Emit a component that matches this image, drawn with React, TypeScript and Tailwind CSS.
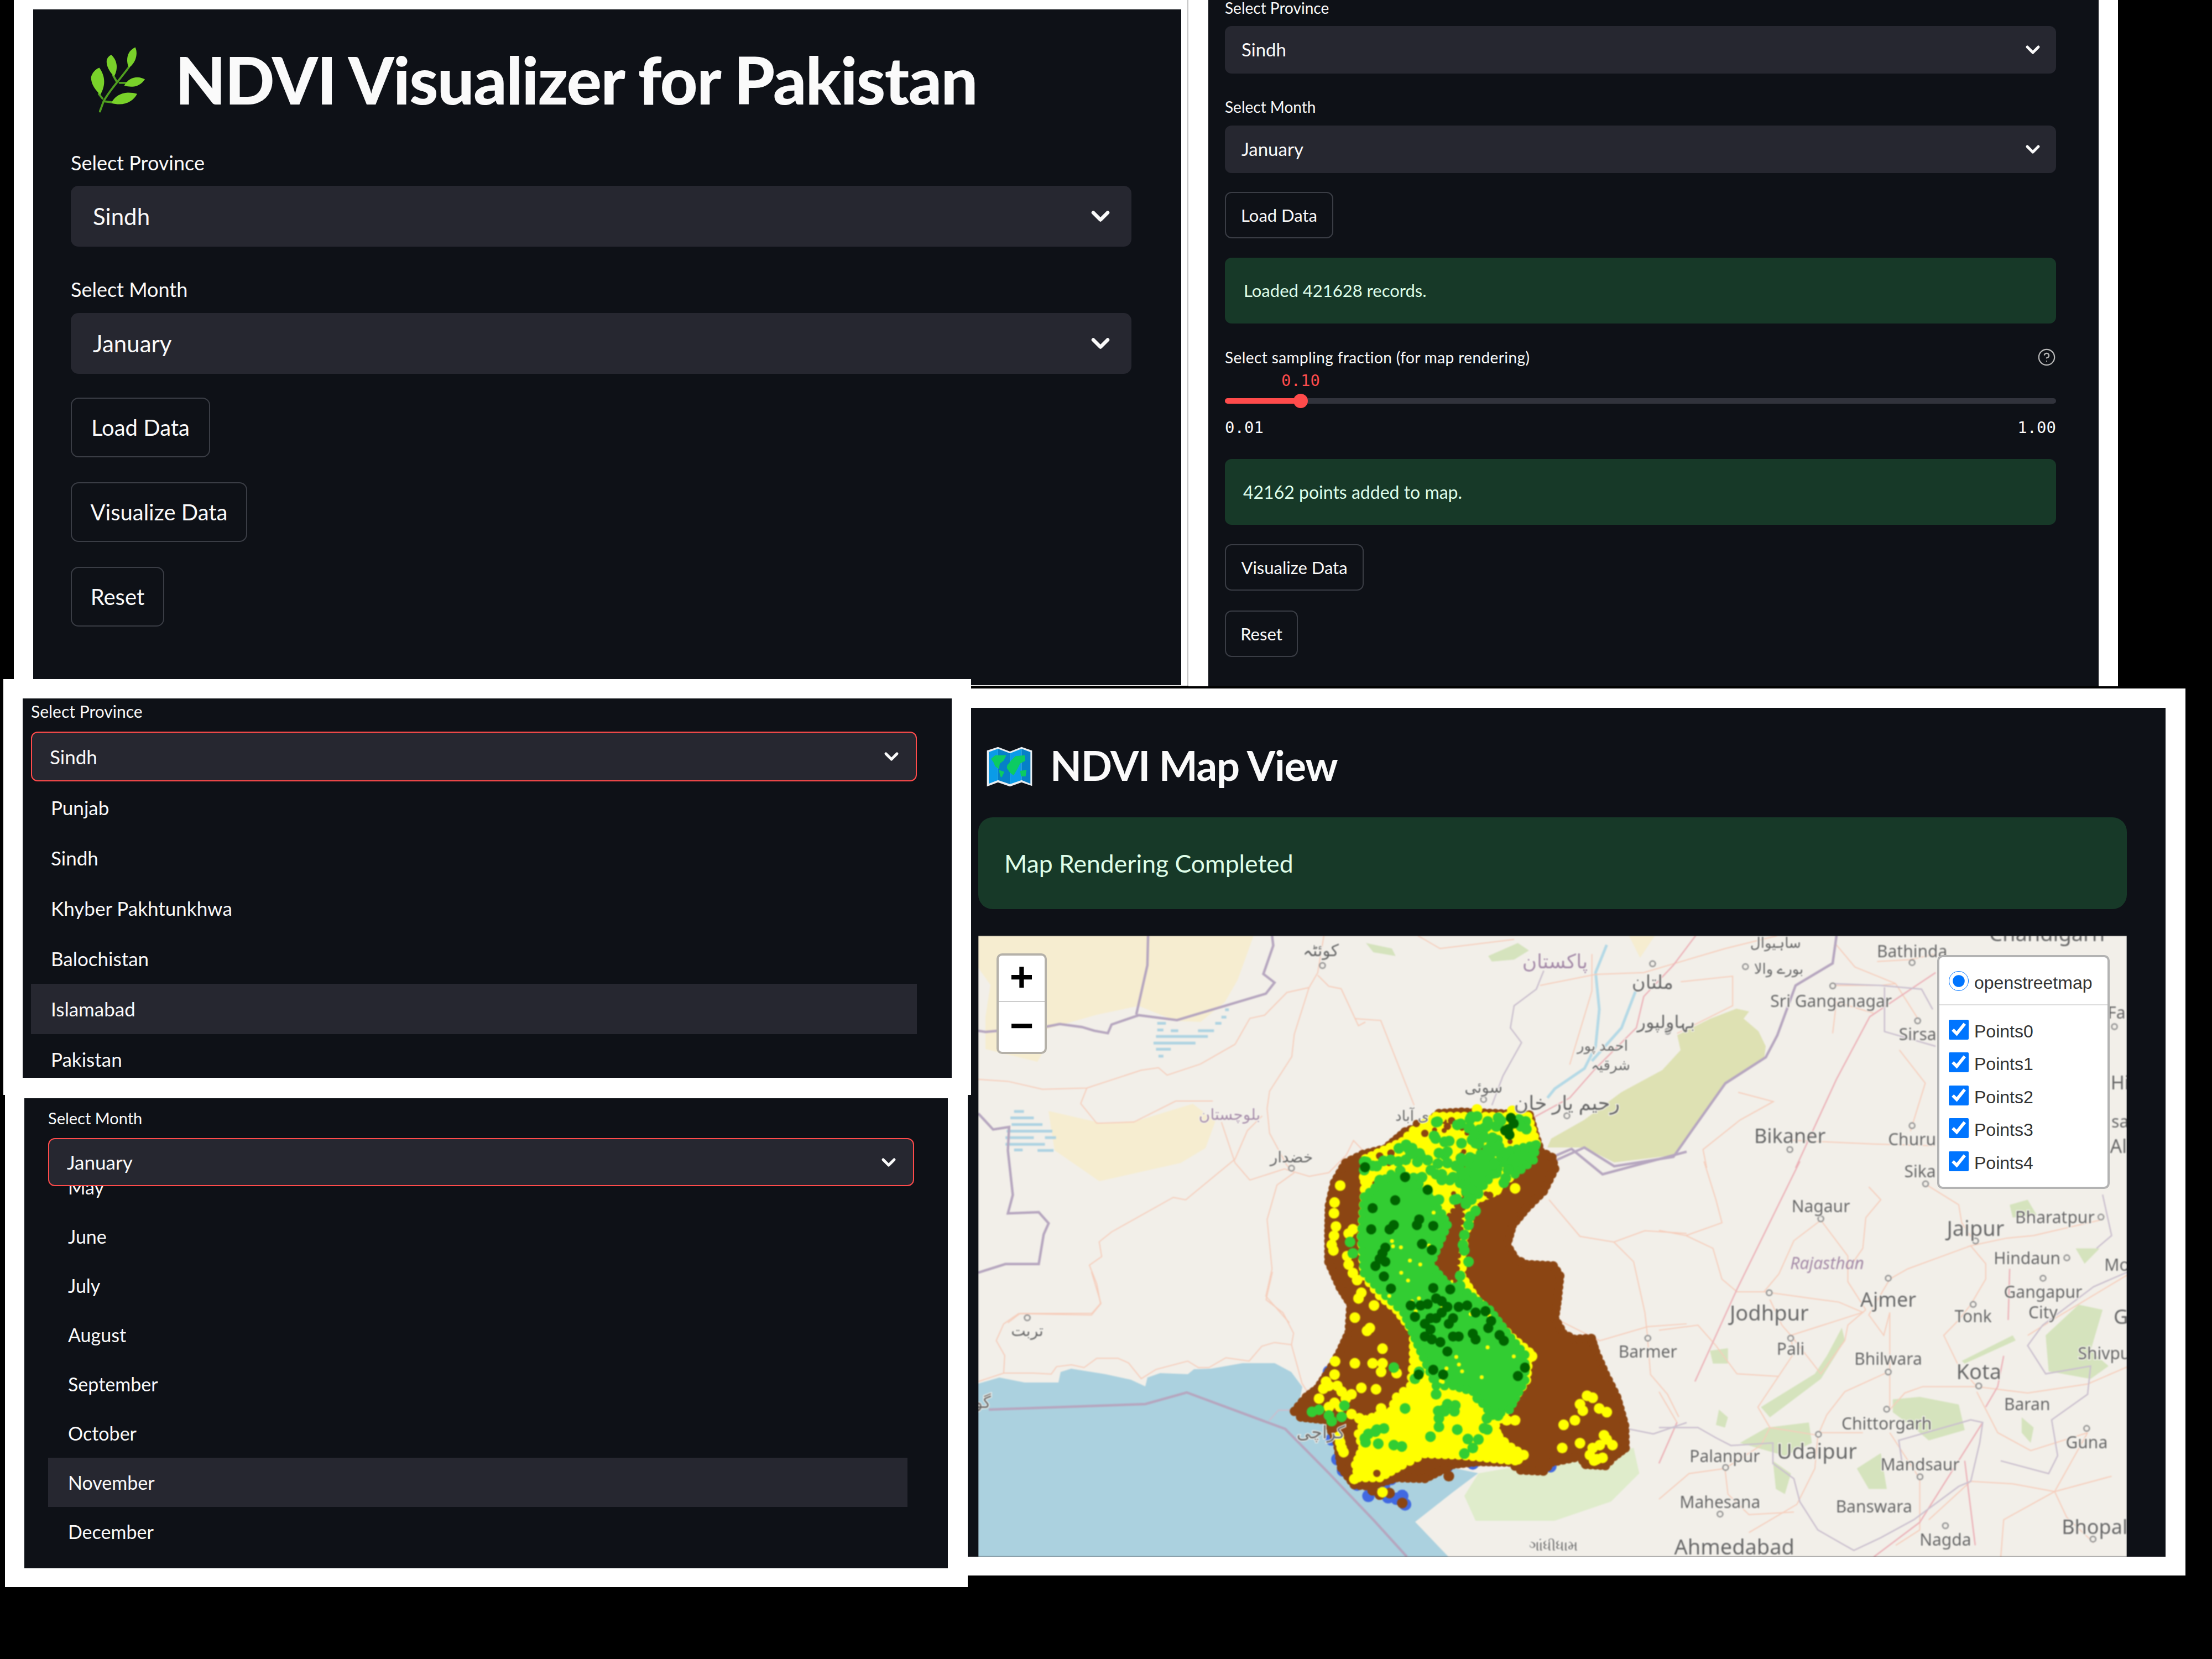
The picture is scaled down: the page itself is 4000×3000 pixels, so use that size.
import React from "react";
import { ChevronDown, CircleHelp } from "lucide-react";

type P = number[][];

// map layers were read off four reference crops, each has its own scale
const A = (l: P) => l.map(([x, y]) => [x / 2.24, y / 2.24]);
const B = (l: P) => l.map(([x, y]) => [x / 2.613, 608 + y / 2.977]);
const C = (l: P) => l.map(([x, y]) => [1231 + x / 1.845, 408 + y / 2.16]);
const D = (l: P) => l.map(([x, y]) => [681 + x / 1.493, y / 3]);
const Z = (l: P) => l.map(([x, y]) => [481 + x / 1.96, 258 + y / 1.96]);
const mx = (x: number) => x * 1.435 - 19;
const my = (y: number) => y * 1.053 - 462;
const raw = (list: P) => list.map(([x, y]) => `${x},${y}`).join(" ");

const desert = [
  [[0, 0], [498, 0], [469, 80], [446, 120], [402, 156], [357, 154], [290, 127], [214, 143], [120, 170], [120, 205], [107, 228], [13, 205], [13, 147], [22, 89], [0, 58]],
  [[127, 317], [223, 339], [286, 335], [388, 304], [429, 335], [411, 384], [366, 411], [219, 444], [138, 388]],
  D([[740, 0], [810, 0], [770, 120]]),
];

const olive = [[1371, 132], [1394, 137], [1384, 150], [1411, 173], [1424, 200], [1421, 223], [1351, 267], [1290, 353], [1257, 397], [1150, 410], [1096, 383], [1029, 383], [1036, 367], [1096, 333], [1163, 283], [1237, 243], [1270, 207], [1264, 180], [1324, 150]];

const forests = [
  C([[610, 650], [560, 760], [520, 830], [340, 960], [370, 1000], [540, 850], [620, 700]]),
  C([[360, 1040], [500, 1020], [510, 1100], [420, 1150], [270, 1100]]),
  C([[1290, 680], [1400, 560], [1480, 580], [1440, 740], [1500, 800], [1440, 850], [1300, 820]]),
  C([[780, 930], [870, 920], [1000, 950], [1020, 1050], [900, 1090], [860, 1050], [780, 980]]),
  C([[1010, 780], [1180, 680], [1190, 700], [1020, 790]]),
  C([[660, 1200], [740, 1140], [760, 1280], [700, 1280]]),
  C([[380, 1170], [440, 1220], [420, 1300], [390, 1280]]),
  C([[1390, 340], [1470, 340], [1420, 400]]),
  C([[1170, 170], [1230, 150], [1260, 210], [1180, 220]]),
  C([[170, 740], [230, 730], [230, 790], [180, 790]]),
  C([[200, 970], [230, 1000], [220, 1040], [190, 1030]]),
  C([[1210, 1000], [1250, 1040], [1240, 1100], [1210, 1060]]),
  D([[30, 40], [100, 70], [110, 110], [50, 90]]),
  D([[360, 110], [440, 40], [470, 80], [430, 130], [370, 140]]),
];
const kutch = Z([[830, 1400], [1000, 1370], [1200, 1350], [1380, 1310], [1400, 1400], [1300, 1500], [1100, 1568], [820, 1568], [780, 1480]]);

const ocean = [
  [0, 810], [38, 799], [84, 808], [145, 808], [149, 789], [168, 783], [230, 793], [276, 803], [302, 815], [306, 799], [329, 791], [379, 793], [390, 784], [421, 783],
  [478, 773], [536, 773], [566, 789], [586, 816], [582, 836], [620, 830], [700, 900], [800, 950], [904, 972], [860, 1005], [790, 1060], [850, 1123], [0, 1123],
];

const hatchA = [
  [725, 355, 760], [725, 382, 750], [780, 385, 810], [890, 385, 955], [720, 408, 930], [710, 435, 880], [720, 460, 780], [730, 488, 750], [960, 355, 985], [985, 330, 1005], [1000, 300, 1015],
  [145, 712, 185], [130, 738, 225], [135, 765, 260], [115, 792, 300], [110, 818, 225], [270, 818, 315], [110, 845, 270], [240, 870, 305], [145, 868, 180],
];

const rivers = [
  D([[680, 50], [650, 200], [660, 400], [650, 600], [620, 720], [540, 830], [520, 880]]),
  D([[760, 290], [720, 500], [640, 680]]),
];

const borders = [
  A([[1190, 0], [1195, 40], [1155, 155], [1200, 190], [1165, 235], [805, 342], [650, 322], [540, 360], [525, 395], [470, 385], [420, 370], [330, 358], [280, 368], [30, 390], [0, 385]]),
  A([[688, 0], [685, 120], [640, 320]]),
  A([[0, 720], [60, 785], [125, 775], [120, 870], [140, 1050], [120, 1125], [245, 1120], [285, 1165], [265, 1210], [245, 1330], [110, 1330], [0, 1365]]),
  [[19, 857], [302, 847], [377, 826], [555, 892], [634, 972], [716, 1058], [775, 1123]],
  [[1552, 0], [1545, 50], [1478, 90], [1445, 180], [1424, 220], [1351, 267], [1290, 353], [1257, 400], [1150, 417], [1096, 383], [1043, 407]],
  Z([[1090, 280], [1160, 250], [1270, 340], [1568, 260]]),
];

const thinBorders = [
  D([[510, 190], [490, 290], [430, 380], [420, 500], [450, 580], [400, 760], [370, 920]]),
  [[526, 877], [543, 858], [574, 858]],
  C([[0, 1040], [130, 1040], [190, 1080], [240, 1110], [380, 1100], [380, 1180], [450, 1240], [470, 1330], [530, 1440], [650, 1520], [740, 1470], [850, 1400], [1000, 1270], [1040, 1250], [1070, 1100], [1080, 1020], [1040, 1010], [950, 1040], [800, 1090], [810, 1170]]),
  C([[1140, 1170], [1300, 1220], [1330, 1150], [1310, 1010], [1430, 910], [1440, 800], [1290, 830], [1230, 720], [1280, 640], [1450, 490], [1568, 430]]),
  C([[1480, 130], [1510, 290], [1460, 340]]),
  Z([[1350, 1240], [1450, 1260], [1568, 1220]]),
  D([[1290, 260], [1420, 270], [1530, 290], [1560, 400]]),
  D([[1430, 280], [1430, 520], [1568, 600]]),
];

const highways = [
  D([[920, 0], [860, 160], [780, 330], [760, 500], [650, 720], [580, 880], [470, 1000]]),
  D([[1568, 200], [1390, 440], [1300, 780], [1190, 1260]]),
  C([[470, 0], [260, 500], [120, 860]]),
  C([[1150, 760], [1130, 880], [1090, 960]]),
  C([[0, 1180], [60, 1020]]),
  C([[1080, 1020], [870, 1410], [700, 1560]]),
  C([[1020, 1170], [1055, 1500]]),
  C([[1170, 420], [1165, 620]]),
];

const roads = [
  A([[0, 582], [120, 590], [260, 622], [440, 617], [660, 545], [730, 535], [765, 565], [900, 520], [1040, 440], [1100, 335], [1160, 322], [1250, 230], [1340, 210], [1375, 150], [1400, 0]]),
  A([[1375, 160], [1420, 205], [1470, 215], [1540, 365], [1568, 350]]),
  A([[1340, 210], [1280, 400], [1270, 490], [1180, 630], [1170, 700], [1180, 800], [1250, 930], [1280, 960]]),
  A([[440, 617], [415, 680], [480, 760], [630, 755], [800, 670], [950, 670]]),
  A([[985, 755], [1040, 920], [1100, 990], [1240, 945], [1340, 975], [1420, 960], [1490, 890], [1520, 830], [1568, 880]]),
  A([[1150, 730], [1090, 790], [1040, 905], [840, 1070], [790, 1060], [540, 1200], [490, 1240], [500, 1300], [450, 1335], [480, 1410], [495, 1490], [460, 1530], [170, 1530], [120, 1568]]),
  A([[1280, 960], [1210, 1010], [1170, 1150], [1190, 1350], [1165, 1460], [1260, 1568]]),
  B([[0, 590], [120, 545], [260, 545], [345, 550], [370, 510], [440, 500], [500, 515], [560, 465], [660, 465], [710, 490], [770, 575], [840, 525], [990, 480], [1040, 515], [1090, 515], [1170, 462], [1280, 480], [1340, 400], [1400, 380], [1480, 392], [1490, 330], [1440, 220], [1360, 150], [1390, 0]]),
  B([[120, 545], [125, 450], [85, 370], [120, 280], [190, 225], [535, 232], [580, 170], [535, 0]]),
  B([[1480, 392], [1530, 600], [1568, 670]]),
  D([[170, 0], [230, 70], [430, 20]]),
  D([[500, 270], [650, 210], [780, 200], [1000, 70], [1140, 0]]),
  D([[0, 450], [70, 460], [160, 920]]),
  D([[880, 250], [1020, 220], [1020, 380], [870, 530]]),
  D([[1290, 270], [1420, 270], [1460, 260]]),
  D([[1410, 140], [1500, 130], [1568, 100]]),
  D([[1460, 260], [1350, 170], [1300, 50]]),
  D([[1460, 260], [1520, 450]]),
  D([[1290, 530], [1300, 360], [1400, 420]]),
  D([[640, 100], [640, 300], [580, 700]]),
  D([[1035, 850], [1130, 900], [1040, 1000], [940, 1160], [950, 1260]]),
  D([[1180, 1110], [1400, 1130], [1568, 1140]]),
  D([[1470, 620], [1540, 800], [1500, 1060]]),
  C([[0, 270], [90, 290], [180, 340], [210, 460], [260, 510], [350, 510], [600, 550], [680, 590], [440, 680], [410, 640], [370, 540]]),
  C([[90, 290], [210, 240], [190, 150], [150, 0]]),
  C([[540, 230], [450, 310], [400, 440], [350, 510]]),
  C([[540, 230], [630, 370], [630, 470], [690, 580]]),
  C([[690, 580], [630, 640], [620, 700], [540, 830], [440, 680]]),
  C([[770, 460], [830, 420], [1040, 330], [1090, 400], [1090, 460], [1040, 560], [1000, 620], [950, 680], [1000, 800], [1060, 880]]),
  C([[1040, 330], [1160, 300], [1250, 290], [1470, 230]]),
  C([[770, 460], [700, 600], [750, 680], [770, 590], [770, 800], [770, 960]]),
  C([[770, 820], [620, 900], [560, 990], [530, 1070]]),
  C([[1060, 880], [1230, 905], [1430, 870], [1568, 800]]),
  C([[1060, 880], [880, 880], [820, 905], [770, 970]]),
  C([[530, 1060], [680, 1060]]),
  C([[530, 1070], [370, 1040], [330, 960], [450, 750], [440, 690]]),
  C([[530, 1070], [520, 1200], [460, 1340], [300, 1450]]),
  C([[0, 1320], [100, 1220], [220, 1200], [340, 1110], [370, 1040]]),
  C([[220, 1200], [230, 1300], [300, 1380], [450, 1370]]),
  C([[770, 1060], [870, 1240], [870, 1440], [790, 1500]]),
  C([[1060, 900], [1130, 1060], [1240, 1130], [1430, 1060]]),
  C([[1430, 1060], [1320, 1290], [1150, 1400], [1140, 1550]]),
  C([[1320, 1290], [1510, 1230]]),
  C([[1320, 1290], [1360, 1390], [1450, 1490]]),
  C([[900, 1400], [1040, 1250], [1180, 1260], [1320, 1290]]),
  C([[0, 660], [130, 640], [190, 720], [260, 830], [400, 840]]),
  C([[700, 100], [740, 150], [690, 220], [680, 340], [650, 390]]),
  C([[890, 90], [1000, 170], [1010, 240], [1050, 310]]),
  C([[1568, 440], [1340, 600], [1230, 680]]),
  C([[0, 900], [60, 1020], [0, 1180]]),
  Z([[1100, 850], [1260, 930], [1430, 880], [1568, 870]]),
  Z([[1080, 430], [1190, 560], [1310, 580], [1420, 540], [1568, 550]]),
  Z([[1310, 580], [1380, 650], [1420, 830], [1430, 920]]),
  Z([[1430, 930], [1440, 1050], [1500, 1120], [1540, 1200]]),
];

const places: [string, number, number, number, string?][] = [
  ["کوئٹہ", 445, 463, 30],
  ["پاکستان", 740, 482, 36, "#a58ba8"],
  ["ملتان", 863, 518, 34],
  ["ساہیوال", 1018, 450, 26],
  ["بورے والا", 1022, 495, 26],
  ["Bathinda", 1190, 465, 30],
  ["Sri Ganganagar", 1088, 550, 30],
  ["بہاولپور", 880, 585, 32],
  ["Sirsa", 1197, 607, 30],
  ["احمد پور", 800, 627, 26],
  ["شرقیہ", 810, 660, 26],
  ["سوئی", 650, 698, 28],
  ["رحیم یار خان", 755, 725, 36],
  ["ی آباد", 560, 747, 26],
  ["بلوچستان", 330, 745, 28, "#a58ba8"],
  ["خضدار", 408, 818, 28],
  ["Bikaner", 1036, 782, 36],
  ["Churu", 1190, 788, 30],
  ["Sika", 1200, 843, 30],
  ["Nagaur", 1075, 903, 30],
  ["Jaipur", 1270, 940, 38],
  ["Bharatpur", 1370, 922, 30],
  ["Hindaun", 1335, 992, 30],
  ["Ajmer", 1160, 1063, 36],
  ["Jodhpur", 1010, 1085, 38],
  ["Tonk", 1267, 1092, 30],
  ["Gangapur", 1355, 1050, 30],
  ["City", 1355, 1085, 30],
  ["Barmer", 857, 1152, 30],
  ["Pali", 1037, 1148, 30],
  ["Bhilwara", 1160, 1165, 30],
  ["Kota", 1274, 1186, 38],
  ["Shivpu", 1432, 1155, 30],
  ["Baran", 1335, 1243, 30],
  ["Chittorgarh", 1158, 1276, 30],
  ["Guna", 1410, 1308, 30],
  ["تربت", 75, 1116, 28],
  ["گو", 19, 1239, 30],
  ["Palanpur", 954, 1332, 30],
  ["Udaipur", 1070, 1323, 38],
  ["Mandsaur", 1200, 1346, 30],
  ["Mahesana", 948, 1411, 30],
  ["Banswara", 1142, 1418, 30],
  ["Bhopal", 1420, 1453, 36],
  ["Nagda", 1232, 1475, 30],
  ["Ahmedabad", 966, 1487, 38],
  ["ગાંધીધામ", 738, 1485, 26],
  ["Chandigarh", 1360, 434, 38],
  ["کراچی", 445, 1290, 32],
  ["Far", 1452, 570, 30],
  ["Hi", 1452, 690, 34],
  ["sa", 1452, 757, 30],
  ["Al", 1450, 800, 34],
  ["Mo", 1448, 1003, 30],
  ["G", 1453, 1093, 36],
];

const towns = [
  [447, 490], [863, 487], [980, 492], [1190, 485], [1090, 525], [882, 603], [1197, 585], [755, 748], [1036, 806],
  [1190, 765], [1207, 865], [1075, 925], [1270, 963], [1428, 922], [1385, 992], [1160, 1027], [1010, 1052], [1267, 1072],
  [1355, 1027], [857, 1130], [1037, 1130], [1160, 1188], [1274, 1212], [1158, 1252], [1072, 1295], [955, 1352], [1200, 1368],
  [948, 1432], [1232, 1452], [1418, 1475], [75, 1095], [408, 838], [1445, 595], [650, 720], [1410, 1285],
];

// Sindh outline and points, in the coordinates of the 800px crop shown at 1.96x
const sindh = [
  [690, 125], [770, 120], [1010, 130], [1030, 200], [1050, 260], [1090, 280], [1100, 320], [1060, 400], [1000, 460], [950, 520],
  [930, 590], [960, 640], [1000, 660], [1095, 665], [1118, 700], [1110, 780], [1100, 850], [1130, 905], [1170, 925], [1230, 922],
  [1245, 970], [1280, 1050], [1320, 1130], [1348, 1230], [1350, 1310], [1310, 1340], [1280, 1372], [1210, 1368], [1190, 1340],
  [1090, 1360], [1060, 1392], [980, 1388], [940, 1360], [830, 1358], [740, 1368], [640, 1418], [540, 1415], [490, 1430], [450, 1445],
  [390, 1440], [345, 1380], [330, 1290], [310, 1250], [290, 1210], [200, 1200], [178, 1180], [220, 1130], [260, 1100], [300, 1040],
  [340, 970], [372, 900], [378, 800], [340, 740], [300, 650], [300, 540], [302, 450], [320, 370], [360, 300], [420, 270], [500, 250],
  [570, 190], [650, 160],
];
const yellowArea = [
  [430, 285], [560, 225], [600, 185], [680, 135], [1005, 135], [1035, 230], [1000, 300], [880, 405], [820, 430], [780, 560], [770, 700],
  [820, 780], [950, 920], [1010, 970], [1000, 1070], [940, 1160], [890, 1230], [900, 1280], [990, 1335], [960, 1355], [760, 1335], [640, 1330],
  [560, 1370], [480, 1415], [405, 1415], [395, 1370], [420, 1310], [405, 1260], [430, 1210], [520, 1180], [540, 1130], [590, 1090], [600, 1000],
  [600, 900], [540, 820], [480, 770], [425, 700], [415, 560], [425, 420],
];
const greenAreas = [
  [[425, 420], [520, 340], [600, 350], [640, 400], [700, 480], [720, 520], [660, 660], [720, 730], [790, 760], [870, 820], [945, 920], [995, 980], [995, 1070], [940, 1175], [880, 1195], [810, 1110], [740, 1090], [680, 1090], [635, 990], [565, 830], [480, 750], [425, 690], [415, 560]],
  [[790, 300], [860, 250], [900, 320], [830, 400], [790, 390]],
  [[920, 260], [1035, 235], [1025, 290], [960, 340], [920, 300]],
];
const brownIsland = [[740, 470], [780, 410], [765, 560], [750, 720], [700, 700], [660, 670], [690, 590], [700, 520]];
const blueDots = [[300, 1040], [310, 1280], [330, 1350], [350, 1390], [400, 1440], [440, 1480], [495, 1445], [510, 1485], [560, 1480], [570, 1510], [540, 1490], [520, 1420], [720, 1375], [810, 1365], [1085, 1375]];
const brownDots = [[455, 1460], [480, 1475], [515, 1470], [560, 1505], [725, 1410], [735, 150], [720, 170], [640, 195], [520, 265], [480, 275], [610, 160], [870, 415], [470, 1400]];
const yellowDots = [
  [340, 380], [320, 440], [318, 478], [325, 525], [318, 558], [310, 590], [316, 610], [370, 550], [385, 535], [365, 630], [370, 660], [385, 690], [400, 715], [415, 760], [405, 780], [460, 805],
  [392, 848], [445, 885], [435, 895], [490, 958], [322, 1003], [392, 1010], [455, 1010], [490, 1010], [485, 1040], [540, 1045], [320, 1050], [290, 1075], [280, 1100], [300, 1090], [330, 1090],
  [345, 1110], [415, 1097], [467, 1102], [380, 1120], [360, 1135], [265, 1135], [320, 1150], [340, 1165], [300, 1165], [485, 1170], [380, 1190], [408, 1205], [930, 1212], [960, 1212], [335, 1270],
  [340, 1290], [345, 1310], [352, 1325], [1215, 1125], [1235, 1132], [1190, 1155], [1200, 1178], [1258, 1170], [1285, 1183], [1132, 1228], [1172, 1212], [1127, 1310], [1190, 1293], [1275, 1265],
  [1285, 1280], [1305, 1300], [490, 1467], [390, 1420], [1235, 1310], [1260, 1300], [1225, 1335], [1250, 1350], [1270, 1345], [1240, 1355], [900, 1270], [920, 1290], [960, 1330], [990, 1335], [970, 1350],
  [1020, 985], [1000, 1000], [960, 390], [895, 395], [1000, 280], [825, 110], [950, 115], [440, 340], [425, 350], [695, 140],
];
const greenDots = [
  [825, 135], [755, 165], [800, 175], [860, 170], [815, 200], [880, 210], [850, 210], [710, 225], [770, 230], [820, 230], [600, 265], [650, 290], [690, 265], [720, 260], [425, 295], [455, 310],
  [425, 325], [600, 380], [630, 350], [680, 340], [700, 340], [650, 400], [600, 430], [690, 430], [745, 430], [750, 310], [765, 370], [770, 340], [805, 430], [820, 470], [800, 490], [795, 520],
  [780, 555], [775, 590], [780, 610], [795, 650], [765, 700], [765, 735], [375, 580], [385, 620], [530, 1025], [605, 1065], [620, 1040], [570, 1170], [680, 1120], [720, 1155], [745, 1180], [710, 1180],
  [690, 1205], [690, 1235], [755, 1245], [660, 1270], [440, 1260], [470, 1245], [430, 1290], [475, 1295], [530, 1300], [240, 1182], [265, 1175], [300, 1195], [310, 1215], [345, 1200], [355, 1160],
  [850, 1240], [830, 1280], [810, 1310], [780, 1330], [920, 370], [935, 325], [925, 265], [1030, 240], [900, 1195], [860, 1205], [865, 310], [885, 305], [800, 280], [770, 290], [720, 300], [980, 170], [1000, 180], [900, 140],
  [1000, 260], [1015, 280], [910, 150], [700, 360], [740, 350],
];
const darkDots = [
  [945, 140], [955, 160], [935, 180], [940, 200], [925, 185], [428, 315], [570, 350], [650, 395], [535, 432], [455, 460], [620, 500], [612, 520], [530, 520], [515, 535], [450, 535], [670, 523],
  [630, 587], [665, 608], [500, 600], [490, 620], [480, 640], [465, 665], [500, 650], [495, 702], [520, 745], [670, 743], [730, 748], [590, 805], [625, 805], [650, 800], [680, 780], [700, 790],
  [720, 810], [760, 810], [790, 805], [820, 830], [855, 825], [875, 860], [865, 885], [905, 910], [920, 930], [810, 905], [820, 925], [740, 850], [725, 870], [700, 830], [680, 850], [660, 850],
  [640, 870], [660, 890], [605, 845], [640, 915], [665, 925], [695, 935], [740, 915], [760, 915], [720, 968], [670, 1033], [705, 1050], [995, 1025], [970, 1055], [618, 1050],
];

// points along a closed outline, used to give the filled areas the bumpy edge of overlapping markers
function alongEdge(poly: P, step: number) {
  const out: P = [];
  poly.forEach(([x1, y1], i) => {
    const [x2, y2] = poly[(i + 1) % poly.length];
    const n = Math.max(1, Math.round(Math.hypot(x2 - x1, y2 - y1) / step));
    for (let k = 0; k < n; k++) {
      out.push([x1 + ((x2 - x1) * k) / n, y1 + ((y2 - y1) * k) / n]);
    }
  });
  return out;
}

function inside(poly: P, x: number, y: number) {
  let hit = false;
  poly.forEach(([x1, y1], i) => {
    const [x2, y2] = poly[(i + 1) % poly.length];
    if (y1 > y !== y2 > y && x < ((x2 - x1) * (y - y1)) / (y2 - y1) + x1) hit = !hit;
  });
  return hit;
}

// fixed seed, so the mottled marker areas come out the same on every run
function scatter(poly: P, count: number, yMin: number, yMax: number, seed: number) {
  let s = seed;
  const next = () => (s = (s * 16807) % 2147483647) / 2147483647;
  const xs = poly.map((p) => p[0]);
  const left = Math.min(...xs);
  const right = Math.max(...xs);
  const out: P = [];
  for (let tries = 0; tries < count * 40 && out.length < count; tries++) {
    const x = left + next() * (right - left);
    const y = yMin + next() * (yMax - yMin);
    if (inside(poly, x, y)) out.push([x, y]);
  }
  return out;
}

const northGreen = scatter(yellowArea, 85, 135, 450, 4711);
const southGreen = scatter(yellowArea, 10, 1120, 1330, 991);
const northBrown = scatter(yellowArea, 22, 150, 420, 2203);
const greenGaps = scatter(greenAreas[0], 26, 430, 1100, 8123);

function Leaf() {
  return (
    <svg viewBox="185 100 300 365" className="w-[100px] h-[122px]">
      <path d="M238 455 L258 400 C290 340 340 290 395 215 M258 400 L300 405 M252 385 L232 360 M330 295 L310 260 M345 300 L380 300" stroke="#4f9e1f" strokeWidth="11" fill="none" strokeLinecap="round" />
      <g fill="#79d12a">
        <path d="M235 218 C265 260 272 310 240 365 C215 340 190 310 190 270 C195 245 215 225 235 218Z" />
        <path d="M300 148 C330 175 340 220 315 265 C290 240 270 205 275 175 C280 160 290 152 300 148Z" />
        <path d="M430 107 C445 140 435 190 395 218 C380 185 385 150 400 130 C410 118 420 112 430 107Z" />
        <path d="M482 280 C460 315 420 330 370 315 C385 285 415 270 440 270 C455 270 470 275 482 280Z" />
        <path d="M440 360 C420 400 370 430 300 410 C315 375 350 355 390 353 C410 353 425 355 440 360Z" />
      </g>
    </svg>
  );
}

function WorldMapEmoji() {
  return (
    <svg viewBox="65 145 255 225" className="w-[85px] h-[75px]">
      <polygon points="70,170 130,150 195,175 258,150 315,170 315,362 258,342 195,365 130,342 70,365" fill="#e9edf0" />
      <polygon points="80,178 130,160 130,330 80,350" fill="#0a9be8" />
      <polygon points="130,160 195,185 195,352 130,330" fill="#0680c8" />
      <polygon points="195,185 258,160 258,330 195,352" fill="#0a9be8" />
      <polygon points="258,160 306,178 306,350 258,330" fill="#0680c8" />
      <g fill="#0ccb62">
        <path d="M92 215 L115 195 L175 195 L160 225 L140 240 L135 270 L115 255 L105 232Z" />
        <path d="M135 275 L165 285 L150 315 L143 310Z" />
        <path d="M180 250 L200 225 L225 200 L275 195 L278 225 L250 240 L235 270 L215 305 L195 290 L178 265Z" />
        <path d="M250 280 L285 275 L280 310 L255 310Z" />
      </g>
    </svg>
  );
}

function SindhPoints() {
  return (
    <g transform="translate(481,258) scale(0.5102)">
      {blueDots.map(([x, y], i) => <circle key={i} cx={x} cy={y} r="22" fill="#4169e1" />)}
      <polygon points={raw(sindh)} fill="#8b4513" />
      {alongEdge(sindh, 20).map(([x, y], i) => <circle key={i} cx={x} cy={y} r="17" fill="#8b4513" />)}
      {brownDots.slice(0, 5).map(([x, y], i) => <circle key={i} cx={x} cy={y} r="19" fill="#8b4513" />)}
      <polygon points={raw(yellowArea)} fill="#ffff00" />
      {alongEdge(yellowArea, 26).map(([x, y], i) => <circle key={i} cx={x} cy={y} r="17" fill="#ffff00" />)}
      {brownDots.slice(5).map(([x, y], i) => <circle key={i} cx={x} cy={y} r="13" fill="#8b4513" />)}
      {northBrown.map(([x, y], i) => <circle key={i} cx={x} cy={y} r="9" fill="#8b4513" />)}
      <polygon points={raw(brownIsland)} fill="#8b4513" />
      {alongEdge(brownIsland, 24).map(([x, y], i) => <circle key={i} cx={x} cy={y} r="10" fill="#8b4513" />)}
      {yellowDots.map(([x, y], i) => <circle key={i} cx={x} cy={y} r="19" fill="#ffff00" />)}
      {northGreen.map(([x, y], i) => <circle key={i} cx={x} cy={y} r="19" fill="#32cd32" />)}
      {southGreen.map(([x, y], i) => <circle key={i} cx={x} cy={y} r="19" fill="#32cd32" />)}
      {greenAreas.map((a, i) => <polygon key={i} points={raw(a)} fill="#32cd32" />)}
      {greenAreas.flatMap((a, i) => alongEdge(a, 26).map(([x, y], k) => <circle key={`${i}-${k}`} cx={x} cy={y} r="16" fill="#32cd32" />))}
      {greenGaps.map(([x, y], i) => <circle key={i} cx={x} cy={y} r="7" fill="#ffff00" />)}
      {greenDots.map(([x, y], i) => <circle key={i} cx={x} cy={y} r="19" fill="#32cd32" />)}
      {darkDots.map(([x, y], i) => <circle key={i} cx={x} cy={y} r="18" fill="#006400" />)}
    </g>
  );
}

function BaseMap() {
  const halo = { paintOrder: "stroke" } as React.CSSProperties;
  return (
    <svg viewBox="0 0 2077 1123" className="block w-[2077px] h-[1123px] blur-[1px]">
      <rect width="2077" height="1123" fill="#f2efe9" />
      {desert.map((d, i) => <polygon key={i} points={raw(d)} fill="#f6edd0" />)}
      <polygon points={raw(olive)} fill="#dee1b3" />
      <polygon points={raw(kutch)} fill="#dfeccb" />
      {forests.map((f, i) => <polygon key={i} points={raw(f)} fill="#d5e3bd" />)}
      <polygon points={raw(ocean)} fill="#abd1df" />
      {hatchA.map(([x1, y, x2], i) => <line key={i} x1={x1 / 2.24} y1={y / 2.24} x2={x2 / 2.24} y2={y / 2.24} stroke="#aed3e2" strokeWidth="5" />)}
      {rivers.map((r, i) => <polyline key={i} points={raw(r)} fill="none" stroke="#b4d9e6" strokeWidth="5" />)}
      {roads.map((r, i) => <polyline key={i} points={raw(r)} fill="none" stroke="#f6cdbb" strokeWidth="2" />)}
      {highways.map((r, i) => <polyline key={i} points={raw(r)} fill="none" stroke="#ecb2b8" strokeWidth="2.5" />)}
      {thinBorders.map((b, i) => <polyline key={i} points={raw(b)} fill="none" stroke="#cabfce" strokeWidth="2.5" />)}
      {borders.map((b, i) => <polyline key={i} points={raw(b)} fill="none" stroke="#b6a6bf" strokeWidth="4.5" />)}
      {towns.map(([x, y], i) => <circle key={i} cx={mx(x)} cy={my(y)} r="5" fill="#f2efe9" stroke="#929292" strokeWidth="2.5" />)}
      <SindhPoints />
      {places.map(([name, x, y, size, color]) => (
        <text key={name} x={mx(x)} y={my(y)} fontSize={size} fill={color ?? "#666666"} stroke="#f5f3ee" strokeWidth="3" textAnchor="middle" dominantBaseline="central" fontFamily="'Noto Sans','DejaVu Sans',sans-serif" style={halo}>
          {name}
        </text>
      ))}
      <text x={mx(1083)} y={my(1000)} fontSize="30" fill="#a58ba8" textAnchor="middle" dominantBaseline="central" fontStyle="italic" fontFamily="'Noto Sans',sans-serif">Rajasthan</text>
    </svg>
  );
}

function MapView() {
  return (
    <div className="relative w-[2077px] h-[1123px] mt-[48px] overflow-hidden">
      <BaseMap />
      <div className="absolute left-[33px] top-[32px] w-[91px] h-[182px] rounded-[10px] border-[4px] border-[#b5b1a9] bg-white flex flex-col overflow-hidden">
        <div className="h-[84px] pt-[6px] flex items-center justify-center border-b-2 border-[#cccccc] text-black text-[74px] leading-none font-bold font-['Liberation_Mono',monospace]">+</div>
        <div className="flex-1 pt-[6px] flex items-center justify-center text-black text-[74px] leading-none font-bold font-['Liberation_Mono',monospace]">−</div>
      </div>
      <div className="absolute right-[31px] top-[35px] w-[312px] h-[423px] rounded-[10px] border-[4px] border-[#b3b3b3] bg-white font-['Liberation_Sans',sans-serif] text-[#333333] text-[32px]">
        <div className="flex items-center h-[87px] pl-[17px] gap-[10px] border-b-2 border-[#dddddd]">
          <input type="radio" readOnly checked className="w-[36px] h-[36px] accent-[#0075ff] m-0" />
          <span className="pt-[6px]">openstreetmap</span>
        </div>
        <div className="flex flex-col pt-[14px]">
          {["Points0", "Points1", "Points2", "Points3", "Points4"].map((p) => (
            <div key={p} className="flex items-center h-[59.5px] pl-[17px] gap-[10px]">
              <input type="checkbox" readOnly checked className="w-[36px] h-[36px] accent-[#0075ff] m-0" />
              <span className="pt-[6px]">{p}</span>
            </div>
          ))}
        </div>
      </div>
    </div>
  );
}

export default function App() {
  return (
    <div className="relative w-[4000px] h-[3000px] bg-black overflow-hidden font-['Lato','Noto_Sans',sans-serif] text-[#fafafa]">
      {/* first screenshot: main form */}
      <div className="absolute left-[25px] top-0 w-[2124px] h-[1240px] bg-white border-r-2 border-[#c4c4c4] pt-[17px] pl-[35px]">
        <div className="w-[2076px] h-[1222px] bg-[#0e1117] pl-[68px] pt-[68px]">
          <div className="flex items-center h-[118px] pl-[35px] gap-[54px]">
            <Leaf />
            <h1 className="text-[118px] leading-none font-black text-[#fafafa] tracking-[-1.5px]">NDVI Visualizer for Pakistan</h1>
          </div>
          <div className="mt-[69px] h-[44px] leading-[44px] text-[36px]">Select Province</div>
          <div className="mt-[20px] w-[1918px] h-[110px] rounded-[14px] bg-[#262730] flex items-center justify-between pl-[40px] pr-[30px] text-[42px]">
            <span>Sindh</span>
            <ChevronDown strokeWidth={3} className="w-[52px] h-[52px]" />
          </div>
          <div className="mt-[55px] h-[44px] leading-[44px] text-[36px]">Select Month</div>
          <div className="mt-[21px] w-[1918px] h-[110px] rounded-[14px] bg-[#262730] flex items-center justify-between pl-[40px] pr-[30px] text-[42px]">
            <span>January</span>
            <ChevronDown strokeWidth={3} className="w-[52px] h-[52px]" />
          </div>
          <div className="mt-[43px] w-[252px] h-[108px] rounded-[14px] border-2 border-[#3a3d45] flex items-center justify-center text-[40px]">Load Data</div>
          <div className="mt-[45px] w-[319px] h-[108px] rounded-[14px] border-2 border-[#3a3d45] flex items-center justify-center text-[40px]">Visualize Data</div>
          <div className="mt-[45px] w-[169px] h-[108px] rounded-[14px] border-2 border-[#3a3d45] flex items-center justify-center text-[40px]">Reset</div>
        </div>
      </div>

      {/* second screenshot: after loading */}
      <div className="absolute left-[2149px] top-0 w-[1681px] h-[1241px] bg-white pl-[36px]">
        <div className="w-[1610px] h-[1241px] bg-[#0e1117] pl-[30px]">
          <div className="w-[1503px]">
            <div className="h-[28px] leading-[28px] text-[28px]">Select Province</div>
            <div className="mt-[19px] h-[86px] rounded-[12px] bg-[#262730] flex items-center justify-between pl-[30px] pr-[22px] text-[33px]">
              <span>Sindh</span>
              <ChevronDown strokeWidth={3} className="w-[40px] h-[40px]" />
            </div>
            <div className="mt-[43px] h-[34px] leading-[34px] text-[28px]">Select Month</div>
            <div className="mt-[17px] h-[86px] rounded-[12px] bg-[#262730] flex items-center justify-between pl-[30px] pr-[22px] text-[33px]">
              <span>January</span>
              <ChevronDown strokeWidth={3} className="w-[40px] h-[40px]" />
            </div>
            <div className="mt-[34px] w-[196px] h-[84px] rounded-[12px] border-2 border-[#3a3d45] flex items-center justify-center text-[31px]">Load Data</div>
            <div className="mt-[35px] h-[119px] rounded-[12px] bg-[#173928] text-[#dffde9] flex items-center pl-[34px] text-[31px]">Loaded 421628 records.</div>
            <div className="mt-[44px] h-[34px] flex items-center justify-between text-[28px]">
              <span className="tracking-[0.4px]">Select sampling fraction (for map rendering)</span>
              <CircleHelp strokeWidth={1.6} className="w-[34px] h-[34px] text-[#b8b8b8]" />
            </div>
            <div className="mt-[10px] h-[30px] pl-[102px] leading-[30px] text-[29px] text-[#ff4b4b] font-['DejaVu_Sans_Mono',monospace]">0.10</div>
            <div className="relative mt-[17px] h-[10px] rounded-full bg-[#31333c]">
              <div className="h-[10px] w-[137px] rounded-full bg-[#ff4b4b]"></div>
              <div className="absolute left-[124px] top-[-8px] w-[26px] h-[26px] rounded-full bg-[#ff4b4b]"></div>
            </div>
            <div className="mt-[27px] h-[32px] leading-[32px] flex justify-between text-[29px] font-['DejaVu_Sans_Mono',monospace]">
              <span>0.01</span>
              <span>1.00</span>
            </div>
            <div className="mt-[41px] h-[119px] rounded-[12px] bg-[#173928] text-[#dffde9] flex items-center pl-[33px] text-[32px]">42162 points added to map.</div>
            <div className="mt-[35px] w-[251px] h-[84px] rounded-[12px] border-2 border-[#3a3d45] flex items-center justify-center text-[31px]">Visualize Data</div>
            <div className="mt-[36px] w-[132px] h-[84px] rounded-[12px] border-2 border-[#3a3d45] flex items-center justify-center text-[31px]">Reset</div>
          </div>
        </div>
      </div>

      {/* map result */}
      <div className="absolute left-[1750px] top-[1245px] w-[2202px] h-[1604px] bg-white pt-[35px]">
        <div className="w-[2166px] h-[1535px] bg-[#0e1117] pl-[19px] pt-[70px]">
          <div className="flex items-center h-[72px] pl-[14px] gap-[31px]">
            <WorldMapEmoji />
            <h2 className="text-[74px] leading-none font-bold tracking-[-1.2px] -mt-[4px]">NDVI Map View</h2>
          </div>
          <div className="mt-[56px] w-[2077px] h-[166px] rounded-[26px] bg-[#173928] text-[#dffde9] flex items-center pl-[47px] text-[44.5px]">Map Rendering Completed</div>
          <MapView />
        </div>
      </div>

      {/* province dropdown open */}
      <div className="absolute left-[6px] top-[1228px] w-[1750px] h-[752px] bg-white pl-[35px] pt-[35px]">
        <div className="w-[1680px] h-[687px] bg-[#0e1117] pl-[15px] pt-[5px] overflow-hidden">
          <div className="h-[36px] leading-[36px] text-[30px]">Select Province</div>
          <div className="mt-[19px] w-[1602px] h-[90px] rounded-[12px] border-2 border-[#ff4b4b] bg-[#262730] flex items-center justify-between pl-[32px] pr-[24px] text-[35px]">
            <span>Sindh</span>
            <ChevronDown strokeWidth={3} className="w-[40px] h-[40px]" />
          </div>
          <div className="mt-[2px] w-[1602px] flex flex-col text-[35px]">
            {["Punjab", "Sindh", "Khyber Pakhtunkhwa", "Balochistan", "Islamabad", "Pakistan"].map((name) => (
              <div key={name} className={name === "Islamabad" ? "h-[91px] flex items-center pl-[36px] bg-[#262730]" : "h-[91px] flex items-center pl-[36px]"}>{name}</div>
            ))}
          </div>
        </div>
      </div>

      {/* month dropdown open */}
      <div className="absolute left-[9px] top-[1949px] w-[1741px] h-[921px] bg-white pl-[35px] pt-[37px]">
        <div className="w-[1670px] h-[850px] bg-[#0e1117] pl-[43px] pt-[18px]">
          <div className="h-[36px] leading-[36px] text-[29px]">Select Month</div>
          <div className="mt-[18px] w-[1566px] h-[87px] rounded-[12px] border-2 border-[#ff4b4b] bg-[#262730] flex items-center justify-between pl-[32px] pr-[24px] text-[35px]">
            <span>January</span>
            <ChevronDown strokeWidth={3} className="w-[40px] h-[40px]" />
          </div>
          <div className="w-[1554px] h-[660px] overflow-hidden text-[34px]">
            <div className="-mt-[43px] flex flex-col">
              {["May", "June", "July", "August", "September", "October", "November", "December"].map((name) => (
                <div key={name} className={name === "November" ? "h-[89px] shrink-0 flex items-center pl-[36px] bg-[#262730]" : "h-[89px] shrink-0 flex items-center pl-[36px]"}>{name}</div>
              ))}
            </div>
          </div>
        </div>
      </div>
    </div>
  );
}
